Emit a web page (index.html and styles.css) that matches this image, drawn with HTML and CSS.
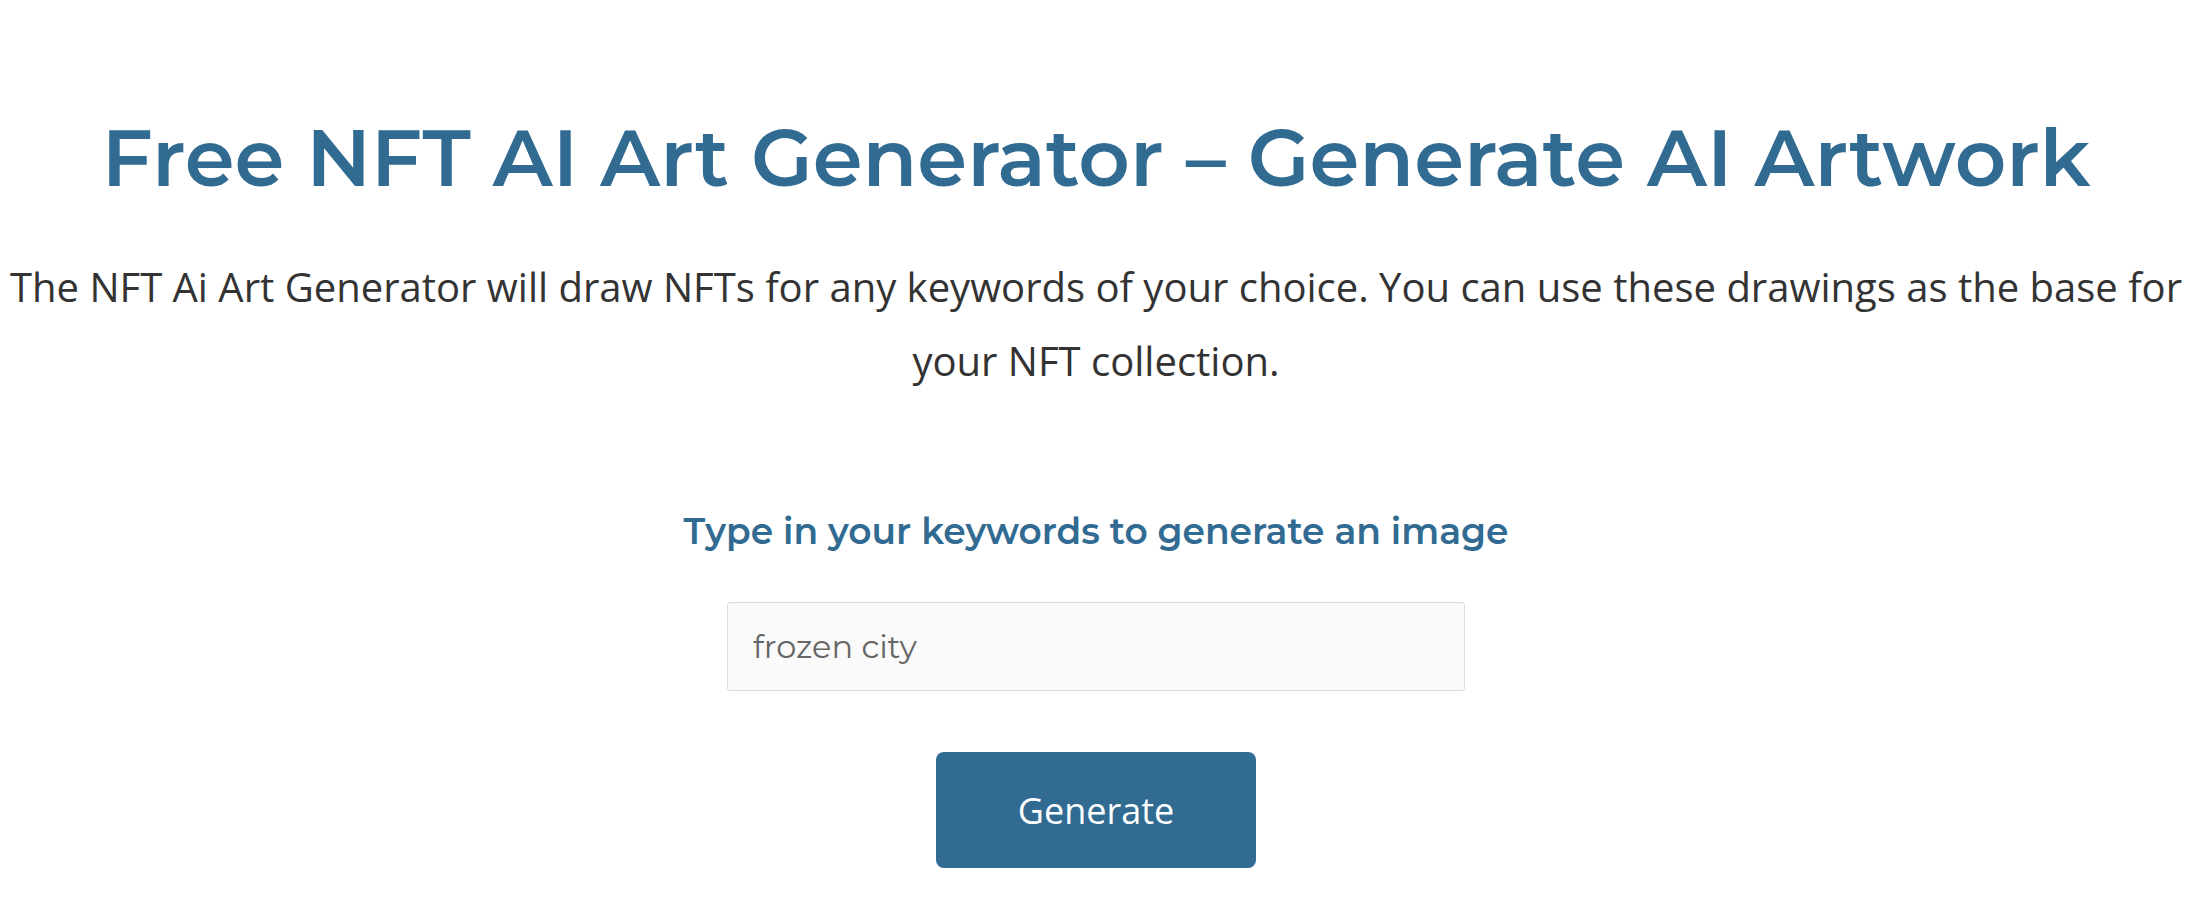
FILE: index.html
```html
<!DOCTYPE html>
<html lang="en">
<head>
    <meta charset="UTF-8">
    <meta name="viewport" content="width=device-width, initial-scale=1.0">
    <title>Free NFT AI Art Generator</title>
    <link rel="stylesheet" href="styles.css">
</head>
<body>
    <div class="page">
        <h1 class="title">Free NFT AI Art Generator – Generate AI Artwork</h1>
        <p class="intro">The NFT Ai Art Generator will draw NFTs for any keywords of your choice. You can use these drawings as the base for your NFT collection.</p>
        <form class="generator">
            <label class="generator-label" for="keywords">Type in your keywords to generate an image</label>
            <input class="keyword-input" id="keywords" type="text" value="frozen city">
            <button class="generate-button" type="submit">Generate</button>
        </form>
    </div>
</body>
</html>
```

FILE: styles.css
```css
html, body {
    margin: 0;
    background-color: white;
    overflow: hidden;
}
.page {
    text-align: center;
    padding: 0 20px 0 0;
}
.title {
    margin: 110px 0 0;
    font-family: "Montserrat", "Inter", sans-serif;
    font-weight: 600;
    font-size: 80px;
    line-height: 1.2;
    color: #316b92;
}
.intro {
    margin: 44px 0 0;
    font-family: "Open Sans", sans-serif;
    font-size: 40px;
    line-height: 74px;
    color: #333;
}
.generator {
    display: flex;
    flex-direction: column;
    align-items: center;
    margin-top: 112px;
}
.generator-label {
    font-family: "Montserrat", "Inter", sans-serif;
    font-weight: 600;
    font-size: 36px;
    line-height: 1.2;
    color: #316b92;
}
.keyword-input {
    box-sizing: border-box;
    width: 738px;
    height: 89px;
    margin-top: 49px;
    padding: 0 25px;
    font-family: "Montserrat", "Inter", sans-serif;
    font-size: 32px;
    color: #666;
    background-color: #fafafa;
    border: 1px solid #dcdcdc;
    border-radius: 3px;
    outline: none;
}
.generate-button {
    width: 320px;
    height: 116px;
    margin-top: 61px;
    font-family: "Open Sans", sans-serif;
    font-size: 36px;
    color: white;
    background-color: #316b92;
    border: none;
    border-radius: 8px;
    cursor: pointer;
}
.generate-button:hover {
    background-color: #285a7b;
}
```
